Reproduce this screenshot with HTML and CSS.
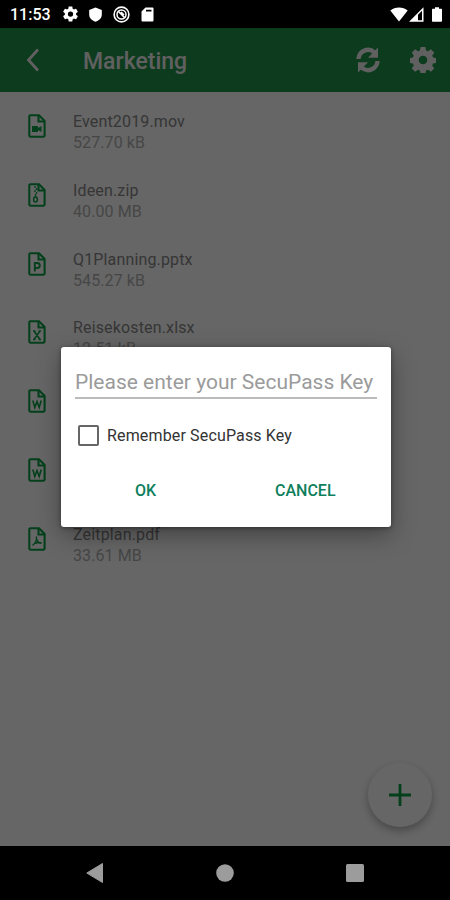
FILE: index.html
```html
<!DOCTYPE html>
<html lang="en">
<head>
    <meta charset="UTF-8">
    <meta name="viewport" content="width=device-width, initial-scale=1.0">
    <title>Marketing</title>
    <link rel="stylesheet" href="styles.css">
</head>
<body>
    <!-- Shared icon shapes -->
    <svg class="symbols" width="0" height="0">
        <symbol id="file" viewBox="0 0 18 24">
            <path d="M2.5 1.2H11L16.6 7V21.5a1.2 1.2 0 0 1-1.2 1.2H2.5a1.2 1.2 0 0 1-1.2-1.2v-19a1.2 1.2 0 0 1 1.2-1.3z" fill="none" stroke="currentColor" stroke-width="2.1"/>
            <path d="M10.5 1v6.500h6" fill="none" stroke="currentColor" stroke-width="2.1"/>
        </symbol>
        <symbol id="gear" viewBox="0 0 24 24">
            <path fill="currentColor" fill-rule="evenodd" d="M9.800 0h4.400l.6 3.200 1.800.8 2.700-1.900 3.100 3.100-1.900 2.700.8 1.800 3.200.6v4.400l-3.200.6-.8 1.800 1.900 2.700-3.100 3.100-2.700-1.900-1.800.8-.6 3.200H9.800l-.6-3.200-1.800-.8-2.700 1.900-3.100-3.100 1.900-2.700-.8-1.800-3.200-.6v-4.400l3.200-.6.8-1.800-1.900-2.700 3.100-3.100L7.400 4l1.800-.8zM12 8a4 4 0 1 0 0 8a4 4 0 0 0 0-8z"/>
        </symbol>
    </svg>

    <div class="status-bar">
        <span class="clock">11:53</span>
        <div class="status-icons">
            <svg width="15" height="16" viewBox="2 2 20 20"><path fill="currentColor" d="M19.43 12.98c.04-.32.07-.64.07-.98s-.03-.66-.07-.98l2.11-1.65c.19-.15.24-.42.12-.64l-2-3.46c-.12-.22-.39-.3-.61-.22l-2.49 1c-.52-.4-1.08-.73-1.69-.98l-.38-2.65A.49.49 0 0 0 14 2h-4c-.25 0-.46.18-.49.42l-.38 2.65c-.61.25-1.17.59-1.69.98l-2.49-1c-.23-.09-.49 0-.61.22l-2 3.46c-.13.22-.07.49.12.64l2.11 1.65c-.04.32-.07.65-.07.98s.03.66.07.98l-2.11 1.65c-.19.15-.24.42-.12.64l2 3.46c.12.22.39.3.61.22l2.49-1c.52.4 1.08.73 1.69.98l.38 2.65c.03.24.24.42.49.42h4c.25 0 .46-.18.49-.42l.38-2.65c.61-.25 1.17-.59 1.69-.98l2.49 1c.23.09.49 0 .61-.22l2-3.46c.12-.22.07-.49-.12-.64zM12 15.5a3.5 3.5 0 1 1 0-7 3.5 3.5 0 0 1 0 7z"/></svg>
            <svg width="13" height="15" viewBox="0 0 13 15"><path fill="currentColor" d="M6.5.5L12.800 3v4.500c0 3.500-2.500 6-6.300 7.300C2.700 13.500.2 11 .2 7.500V3z"/></svg>
            <svg width="17" height="17" viewBox="0 0 17 17" fill="none" stroke="currentColor"><circle cx="8.5" cy="8.5" r="7.4" stroke-width="1.600"/><circle cx="8.5" cy="8.5" r="4.500" stroke-width="1.500"/><path d="M5 5l7 7M8 6l3 3" stroke-width="1.700"/></svg>
            <svg width="13" height="15" viewBox="0 0 13 15"><path fill="currentColor" fill-rule="evenodd" d="M4.500.5H11.500a1 1 0 0 1 1 1v12a1 1 0 0 1-1 1h-10a1 1 0 0 1-1-1V4.500zM5 2.800v1.600h5.500V2.800z"/></svg>
        </div>
        <div class="signal-icons">
            <svg width="18" height="15" viewBox="0 0 18 15"><path fill="currentColor" d="M.3 3.500C5-.5 13-.5 17.700 3.500L9 14.500z"/></svg>
            <svg width="15" height="15" viewBox="0 0 15 15"><path fill="currentColor" fill-rule="evenodd" d="M0 14.800L14.500.3v14.500zM9 7.800v5.500h4V3.800z"/></svg>
            <svg class="battery" width="10" height="15" viewBox="0 0 10 15"><path fill="currentColor" d="M3 .3h4v1.500h2c.6 0 1 .4 1 1v11c0 .6-.4 1-1 1H1c-.6 0-1-.4-1-1v-11c0-.6.4-1 1-1h2z"/></svg>
        </div>
    </div>

    <div class="screen">
        <div class="header">
            <svg class="back" width="14" height="24" viewBox="0 0 14 24"><path d="M12 1.500L2.500 12l9.500 10.500" fill="none" stroke="currentColor" stroke-width="2.800"/></svg>
            <h1>Marketing</h1>
            <svg class="refresh" width="24" height="26" viewBox="0 0 24 26">
                <path d="M2.500 12A9.500 9.500 0 0 1 18.500 5.500M21.500 14A9.500 9.500 0 0 1 5.500 20.500" fill="none" stroke="currentColor" stroke-width="4.400"/>
                <path fill="currentColor" d="M22 .5v10.300h-10zM2 25.500v-10.300h10z"/>
            </svg>
            <svg class="settings" width="26" height="26"><use href="#gear"/></svg>
        </div>

        <div class="file-list">
            <div class="file-item">
                <svg class="file-icon" viewBox="0 0 18 24"><use href="#file"/><path fill="currentColor" d="M4 12h6v2l3.500-2v6L10 16v2H4z"/></svg>
                <div>
                    <div class="file-name">Event2019.mov</div>
                    <div class="file-size">527.70 kB</div>
                </div>
            </div>
            <div class="file-item">
                <svg class="file-icon" viewBox="0 0 18 24"><use href="#file"/><path d="M7 3v2M8.500 5v2M7 7v2M8.500 9v2M7.500 11v3" stroke="currentColor" stroke-width="1.300"/><ellipse cx="7.500" cy="16.500" rx="1.900" ry="2.500" fill="none" stroke="currentColor" stroke-width="1.500"/></svg>
                <div>
                    <div class="file-name">Ideen.zip</div>
                    <div class="file-size">40.00 MB</div>
                </div>
            </div>
            <div class="file-item">
                <svg class="file-icon" viewBox="0 0 18 24"><use href="#file"/><path d="M6.800 19.500v-8.500h2.500a2.500 2.500 0 0 1 0 5H6.800" fill="none" stroke="currentColor" stroke-width="1.900"/></svg>
                <div>
                    <div class="file-name">Q1Planning.pptx</div>
                    <div class="file-size">545.27 kB</div>
                </div>
            </div>
            <div class="file-item">
                <svg class="file-icon" viewBox="0 0 18 24"><use href="#file"/><path d="M6 11l6 8.500M12 11l-6 8.500M5 11h2.500M10.500 11H13M5 19.500h2.500M10.500 19.500H13" fill="none" stroke="currentColor" stroke-width="1.600"/></svg>
                <div>
                    <div class="file-name">Reisekosten.xlsx</div>
                    <div class="file-size">12.51 kB</div>
                </div>
            </div>
            <div class="file-item">
                <svg class="file-icon" viewBox="0 0 18 24"><use href="#file"/><path d="M4.800 11.500l2 7L9 12.500l2.200 6 2-7" fill="none" stroke="currentColor" stroke-width="1.600"/></svg>
            </div>
            <div class="file-item">
                <svg class="file-icon" viewBox="0 0 18 24"><use href="#file"/><path d="M4.800 11.500l2 7L9 12.500l2.200 6 2-7" fill="none" stroke="currentColor" stroke-width="1.600"/></svg>
            </div>
            <div class="file-item">
                <svg class="file-icon" viewBox="0 0 18 24"><use href="#file"/><path d="M8.300 9.500c.8 3-.8 6.500-3.800 9M8.500 12c.8 2.500 2.500 4.200 5 4.300M6.500 16.500c2-1 4.500-1.300 7-.7" fill="none" stroke="currentColor" stroke-width="1.400"/></svg>
                <div>
                    <div class="file-name">Zeitplan.pdf</div>
                    <div class="file-size">33.61 MB</div>
                </div>
            </div>
        </div>

        <div class="add-button">
            <svg width="22" height="22" viewBox="0 0 22 22"><path d="M11 0v22M0 11h22" stroke="currentColor" stroke-width="2.800"/></svg>
        </div>

        <!-- The Modal -->
        <div class="modal">
            <div class="modal-content">
                <div class="key-input">Please enter your SecuPass Key</div>
                <div class="remember">
                    <span class="checkbox"></span>
                    <span class="remember-label">Remember SecuPass Key</span>
                </div>
                <div class="actions">
                    <span class="ok">OK</span>
                    <span class="cancel">CANCEL</span>
                </div>
            </div>
        </div>
    </div>

    <div class="nav-bar">
        <svg width="18" height="20" viewBox="0 0 18 20"><path fill="currentColor" d="M16.500.5v19L.8 10z" stroke="currentColor" stroke-linejoin="round"/></svg>
        <svg width="18" height="20" viewBox="0 0 18 20"><circle cx="9" cy="10" r="8.800" fill="currentColor"/></svg>
        <svg width="18" height="20" viewBox="0 0 18 20"><rect y="1" width="18" height="18" rx="1.500" fill="currentColor"/></svg>
    </div>
</body>
</html>
```
FILE: styles.css
```css
body {
    font-family: Roboto, sans-serif;
    margin: 0;
    width: 450px;
    height: 900px;
    background-color: #000;
    overflow: hidden;
}
svg {
    display: block;
    flex: none;
}
.symbols {
    position: absolute;
}

/* Status bar */
.status-bar {
    display: flex;
    align-items: center;
    height: 28px;
    padding: 0 8px 0 10px;
    box-sizing: border-box;
    color: #fff;
}
.clock {
    width: 53px;
    font-size: 16px;
    font-weight: 500;
    line-height: 28px;
    padding-top: 2px;
}
.status-icons {
    display: flex;
    align-items: center;
    gap: 11px;
}
.signal-icons {
    display: flex;
    align-items: center;
    gap: 1px;
    margin-left: auto;
}
.battery {
    margin-left: 7px;
}

/* App screen */
.screen {
    position: relative;
    height: 818px;
    background-color: #fff;
}
.header {
    display: flex;
    align-items: center;
    height: 64px;
    padding: 0 14px 0 26px;
    box-sizing: border-box;
    background-color: #20944a;
    color: #f0f0f0;
}
h1 {
    flex: 1;
    margin: 3px 0 0 43px;
    font-size: 23px;
    font-weight: 500;
}
.settings {
    margin-left: 30px;
}
.file-list {
    padding-top: 17px;
}
.file-item {
    display: flex;
    height: 68.8px;
    padding-left: 28px;
}
.file-icon {
    width: 18px;
    height: 24px;
    margin: 5px 27px 0 0;
    color: #0aa045;
}
.file-name {
    padding-top: 1px;
    font-size: 16px;
    line-height: 23px;
    letter-spacing: 0.15px;
    color: #888;
}
.file-size {
    font-size: 16px;
    line-height: 20px;
    letter-spacing: 0.1px;
    color: #b0b0b0;
}
.add-button {
    position: absolute;
    right: 18px;
    bottom: 19px;
    width: 64px;
    height: 64px;
    display: flex;
    align-items: center;
    justify-content: center;
    border-radius: 50%;
    background-color: #fff;
    color: #0aa045;
    box-shadow: 0 4px 8px rgba(0, 0, 0, 0.3);
}

/* Modal styles */
.modal {
    position: absolute;
    top: 0;
    left: 0;
    width: 100%;
    height: 100%;
    background-color: rgba(0, 0, 0, 0.6);
}
.modal-content {
    width: 330px;
    height: 180px;
    margin: 319px 0 0 61px;
    padding: 17px 14px 0 14px;
    box-sizing: border-box;
    border-radius: 3px;
    background-color: #fff;
    box-shadow: 0 8px 24px rgba(0, 0, 0, 0.35), 0 1px 4px rgba(0, 0, 0, 0.4);
}
.key-input {
    height: 35px;
    border-bottom: 2px solid #bbb;
    box-sizing: border-box;
    font-size: 21px;
    line-height: 37px;
    white-space: nowrap;
    color: #9b9b9b;
}
.remember {
    display: flex;
    align-items: center;
    height: 24px;
    margin: 24px 0 0 3px;
}
.checkbox {
    width: 21px;
    height: 21px;
    box-sizing: border-box;
    border: 2px solid #666;
    border-radius: 2px;
}
.remember-label {
    margin-left: 8px;
    font-size: 16px;
    letter-spacing: 0.15px;
    color: #333;
}
.actions {
    display: flex;
    margin-top: 34px;
    font-size: 16px;
    font-weight: 500;
    line-height: 20px;
    color: #0e7f5c;
}
.ok {
    width: 141px;
    padding-left: 60px;
    box-sizing: border-box;
}
.cancel {
    margin-left: 59px;
}

/* Navigation bar */
.nav-bar {
    display: flex;
    align-items: center;
    justify-content: space-between;
    height: 54px;
    padding: 0 86px;
    box-sizing: border-box;
    color: #9c9c9c;
}
```
